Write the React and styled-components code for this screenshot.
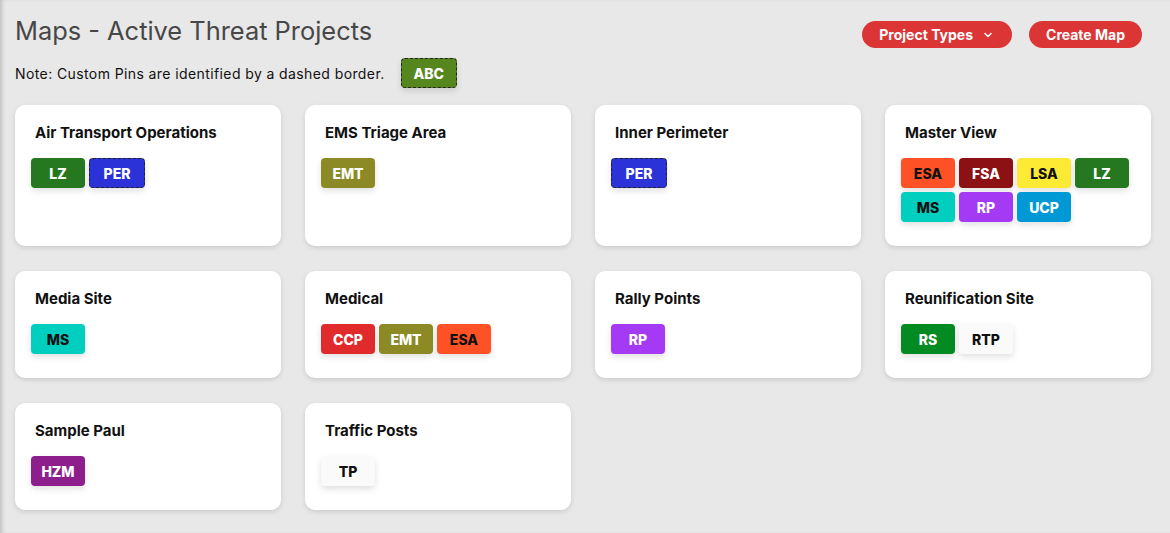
import React from 'react';
import styled, { createGlobalStyle } from 'styled-components';

const GlobalStyle = createGlobalStyle`
  html, body {
    margin: 0;
    padding: 0;
    background: #e8e8e8;
    font-family: Inter, Lato, sans-serif;
  }
  body {
    box-shadow: inset 4px 0 4px -2px rgba(0, 0, 0, 0.18);
    min-height: 533px;
  }
`;

const Page = styled.div`
  padding: 15px 19px 20px 15px;
`;

const Header = styled.div`
  display: flex;
  justify-content: space-between;
  align-items: flex-start;
`;

const Title = styled.h1`
  margin: 0;
  font-size: 25.4px;
  font-weight: 400;
  color: #474747;
  line-height: 31px;
`;

const Actions = styled.div`
  display: flex;
  gap: 17px;
  padding-top: 6px;
  padding-right: 9px;
`;

const RedButton = styled.button`
  display: flex;
  align-items: center;
  gap: 10px;
  height: 27px;
  padding: 0 ${p => (p.$menu ? '19px' : '17px')} 0 17px;
  border: none;
  border-radius: 14px;
  background: #dc3535;
  color: #fff;
  font-family: inherit;
  font-size: 14px;
  font-weight: 700;
  cursor: pointer;
`;

const Note = styled.div`
  display: flex;
  align-items: center;
  gap: 16px;
  margin-top: 10px;
  font-size: 14px;
  letter-spacing: 0.4px;
  color: #111;
`;

const Grid = styled.div`
  display: grid;
  grid-template-columns: repeat(4, 266px);
  column-gap: 24px;
  row-gap: 25px;
  margin-top: 17px;
`;

const Card = styled.div`
  background: #fff;
  border-radius: 10px;
  box-shadow: 0 2px 5px rgba(0, 0, 0, 0.12);
  padding: 18px 16px 24px;
`;

const CardTitle = styled.div`
  font-size: 15px;
  font-weight: 700;
  color: #111;
  line-height: 20px;
  padding-left: 4px;
  margin-bottom: 15px;
`;

const Pins = styled.div`
  display: flex;
  flex-wrap: wrap;
  gap: 4px;
`;

const Pin = styled.div`
  box-sizing: border-box;
  width: ${p => (p.$custom ? '56px' : '54px')};
  height: 30px;
  border-radius: 4px;
  display: flex;
  align-items: center;
  justify-content: center;
  background: ${p => p.$bg};
  color: ${p => (p.$dark ? '#111' : '#fff')};
  font-size: 14px;
  font-weight: 800;
  letter-spacing: 0;
  box-shadow: 0 3px 6px rgba(0, 0, 0, 0.12);
  border: ${p => (p.$custom ? '1px dashed #222' : 'none')};
`;

const PINS = {
  LZ: { bg: '#25781f' },
  PER: { bg: '#2b32d8', custom: true },
  EMT: { bg: '#8b8a24' },
  ESA: { bg: '#fe5226', dark: true },
  FSA: { bg: '#8b1115' },
  LSA: { bg: '#fdea35', dark: true },
  MS: { bg: '#00cfc0', dark: true },
  RP: { bg: '#a53af4' },
  UCP: { bg: '#0099d6' },
  CCP: { bg: '#e02a2c' },
  RS: { bg: '#048a22' },
  RTP: { bg: '#fafafa', dark: true },
  TP: { bg: '#fafafa', dark: true },
  HZM: { bg: '#8e1e8c' },
};

const PROJECTS = [
  { name: 'Air Transport Operations', pins: ['LZ', 'PER'] },
  { name: 'EMS Triage Area', pins: ['EMT'] },
  { name: 'Inner Perimeter', pins: ['PER'] },
  { name: 'Master View', pins: ['ESA', 'FSA', 'LSA', 'LZ', 'MS', 'RP', 'UCP'] },
  { name: 'Media Site', pins: ['MS'] },
  { name: 'Medical', pins: ['CCP', 'EMT', 'ESA'] },
  { name: 'Rally Points', pins: ['RP'] },
  { name: 'Reunification Site', pins: ['RS', 'RTP'] },
  { name: 'Sample Paul', pins: ['HZM'] },
  { name: 'Traffic Posts', pins: ['TP'] },
];

const Chevron = () => (
  <svg width="10" height="10" viewBox="0 0 10 10" fill="none">
    <path d="M2 3.5 L5 6.5 L8 3.5" stroke="#fff" strokeWidth="1.5" strokeLinecap="round" strokeLinejoin="round" />
  </svg>
);

export default function App() {
  return (
    <Page>
      <GlobalStyle />
      <Header>
        <Title>Maps - Active Threat Projects</Title>
        <Actions>
          <RedButton $menu>
            Project Types <Chevron />
          </RedButton>
          <RedButton>Create Map</RedButton>
        </Actions>
      </Header>
      <Note>
        Note: Custom Pins are identified by a dashed border.
        <Pin $bg="#55871e" $custom>ABC</Pin>
      </Note>
      <Grid>
        {PROJECTS.map(p => (
          <Card key={p.name}>
            <CardTitle>{p.name}</CardTitle>
            <Pins>
              {p.pins.map((code, i) => {
                const s = PINS[code];
                return (
                  <Pin key={i} $bg={s.bg} $dark={s.dark} $custom={s.custom}>
                    {code}
                  </Pin>
                );
              })}
            </Pins>
          </Card>
        ))}
      </Grid>
    </Page>
  );
}
